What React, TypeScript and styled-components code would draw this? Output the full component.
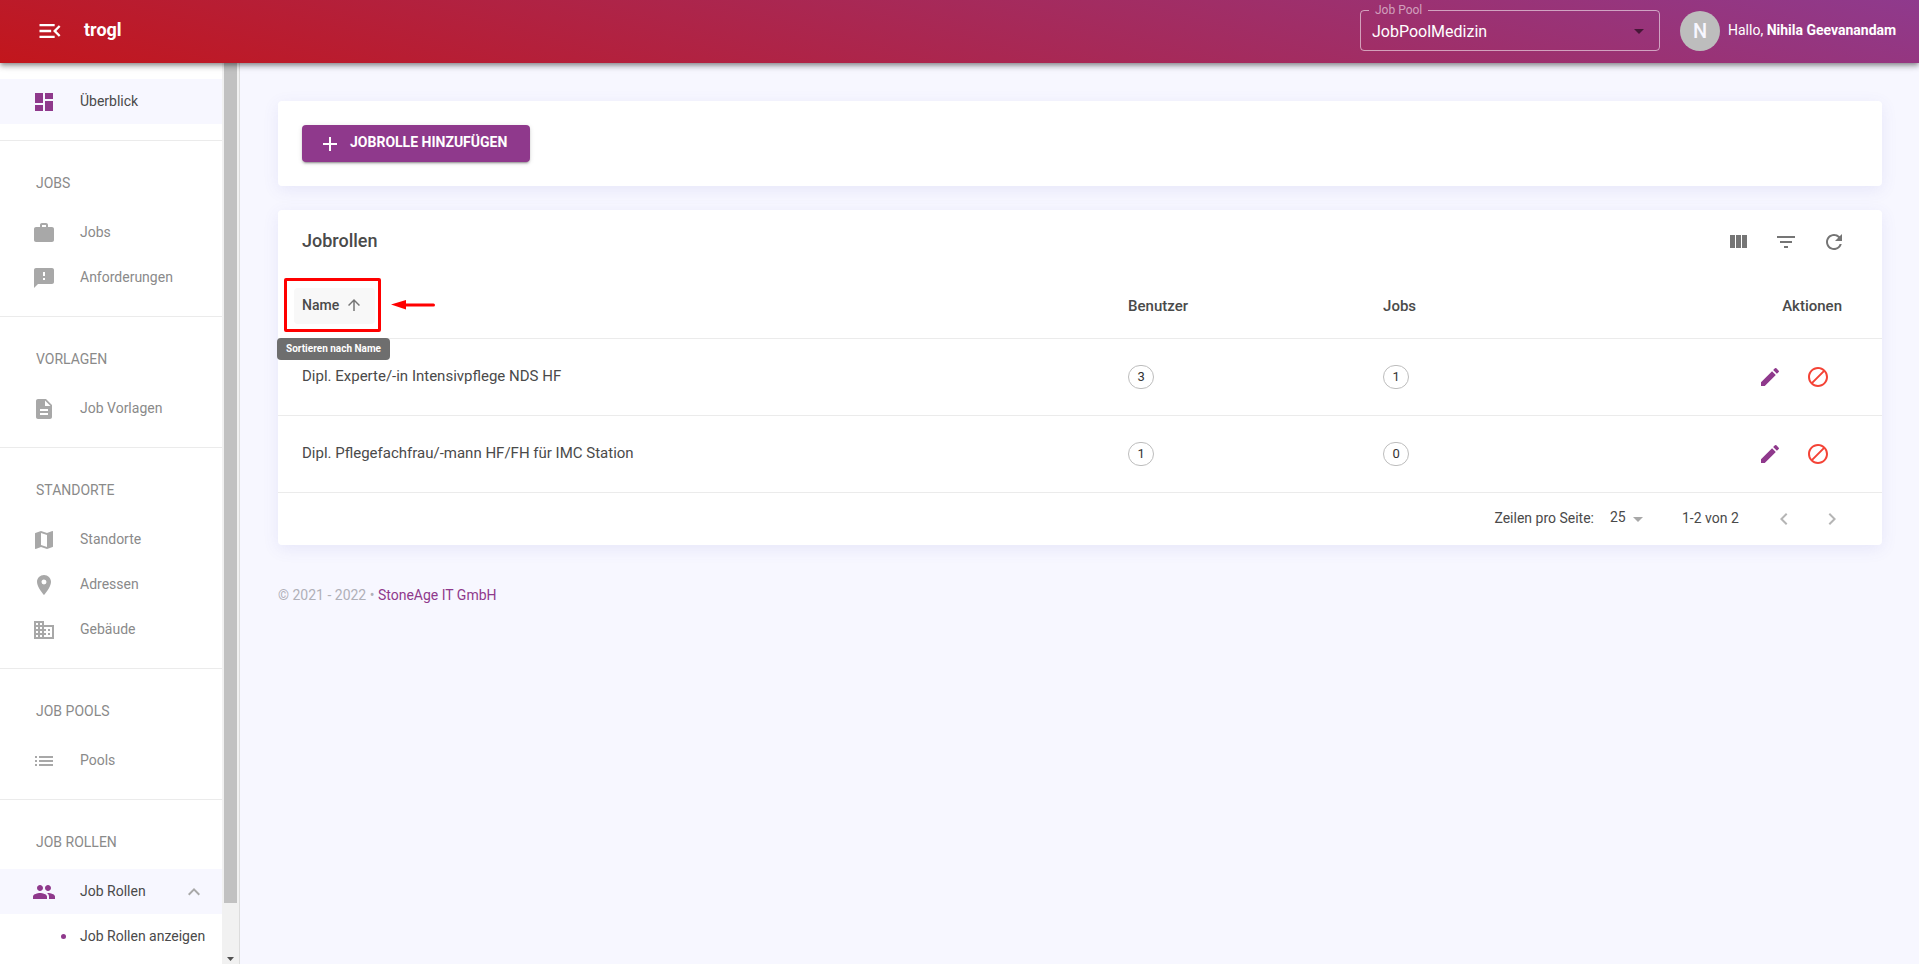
import React from "react";
import styled, { createGlobalStyle } from "styled-components";
import type { IconType } from "react-icons";
import {
  MdAdd,
  MdArrowDropDown,
  MdArrowUpward,
  MdBlock,
  MdBusiness,
  MdChevronLeft,
  MdChevronRight,
  MdDashboard,
  MdDescription,
  MdEdit,
  MdExpandLess,
  MdFeedback,
  MdFilterList,
  MdList,
  MdLocationOn,
  MdMap,
  MdMenuOpen,
  MdPeople,
  MdRefresh,
  MdWork,
} from "react-icons/md";

const purple = "#8f398c";
const pageTint = "#f7f7ff";
const textDark = "#4a4a4a";
const textMuted = "#8a8a8a";
const iconMuted = "#a8a8a8";
const line = "#ebebeb";

const GlobalStyle = createGlobalStyle`
  *, *::before, *::after { box-sizing: border-box; }
  body {
    margin: 0;
    background: ${pageTint};
    color: ${textDark};
    font-family: Roboto, "Liberation Sans", sans-serif;
    font-size: 14px;
    line-height: 20px;
  }
  button, select { font: inherit; color: inherit; }
  ul { list-style: none; margin: 0; padding: 0; }
`;

const Shell = styled.div`
  display: flex;
  flex-direction: column;
  height: 100vh;
  overflow: hidden;
`;

/* ---------- top bar ---------- */

const TopBar = styled.header`
  position: relative;
  z-index: 2;
  flex: none;
  display: flex;
  align-items: center;
  height: 63px;
  padding: 0 19px 2px 36px;
  color: #fff;
  background: linear-gradient(15deg, #c2161c 0%, #8f3a8d 100%);
  box-shadow: 0 2px 4px -1px rgba(0, 0, 0, 0.3), 0 4px 5px rgba(0, 0, 0, 0.18),
    0 1px 10px rgba(0, 0, 0, 0.12);
`;

const MenuToggle = styled.button`
  display: flex;
  padding: 0;
  border: 0;
  background: none;
  cursor: pointer;
`;

const Brand = styled.a`
  margin: 0 auto 0 20px;
  padding-bottom: 2px;
  color: #fff;
  font-size: 18px;
  font-weight: 700;
  text-decoration: none;
`;

const PoolField = styled.fieldset`
  position: relative;
  width: 300px;
  height: 46px;
  margin: 0 20px 6px 0;
  padding: 0;
  border: 1px solid rgba(255, 255, 255, 0.55);
  border-radius: 4px;
`;

const PoolLegend = styled.legend`
  height: 11px;
  margin-left: 8px;
  padding: 0 6px;
  color: rgba(255, 255, 255, 0.55);
  font-size: 12px;
  line-height: 11px;
`;

const PoolSelect = styled.select`
  display: block;
  width: 100%;
  height: 32px;
  padding: 0 32px 0 11px;
  border: 0;
  outline: 0;
  appearance: none;
  background: none;
  color: #fff;
  font-size: 16px;

  option { color: ${textDark}; }
`;

const PoolCaret = styled(MdArrowDropDown)`
  position: absolute;
  right: 8px;
  bottom: 7px;
  pointer-events: none;
  color: rgba(0, 0, 0, 0.54);
`;

const Avatar = styled.span`
  display: grid;
  place-items: center;
  width: 40px;
  height: 40px;
  border-radius: 50%;
  background: #bdbdbd;
  color: ${pageTint};
  font-size: 20px;
  font-weight: 500;
`;

const Greeting = styled.span`
  min-width: 172px;
  margin-left: 8px;
  padding-bottom: 2px;
  b { font-weight: 700; }
`;

/* ---------- sidebar ---------- */

const Body = styled.div`
  flex: 1;
  display: flex;
  min-height: 0;
`;

const Sidebar = styled.aside`
  flex: none;
  display: flex;
  width: 240px;
  background: #fff;
  border-right: 1px solid #dcdcdc;
`;

const SideNav = styled.nav`
  flex: 1;
  min-width: 0;
  overflow: hidden;
`;

const Section = styled.section`
  padding-bottom: 16px;
  & + & { border-top: 1px solid ${line}; }
  &:first-child { padding-top: 16px; }
`;

const SectionTitle = styled.h2`
  margin: 0;
  padding: 32px 36px 17px;
  color: ${textMuted};
  font-size: 14px;
  font-weight: 400;
  line-height: 20px;
  text-transform: uppercase;
`;

const NavLink = styled.a<{ $active?: boolean; $sub?: boolean }>`
  display: flex;
  align-items: center;
  gap: 24px;
  height: 45px;
  padding: 0 16px 0 32px;
  color: ${(p) => (p.$active || p.$sub ? textDark : textMuted)};
  background: ${(p) => (p.$active ? pageTint : "transparent")};
  text-decoration: none;
  white-space: nowrap;

  svg { flex: none; color: ${(p) => (p.$active ? purple : iconMuted)}; }
`;

const NavLabel = styled.span`
  flex: 1;
  padding-bottom: 2px;
`;

const Expander = styled(MdExpandLess)`
  && { color: ${iconMuted}; }
`;

const Bullet = styled.span`
  width: 5px;
  height: 5px;
  margin: 0 -10px 0 29px;
  border-radius: 50%;
  background: ${purple};
`;

const ScrollTrack = styled.div`
  display: flex;
  flex-direction: column;
  align-items: center;
  width: 17px;
  background: #f1f1f1;
`;

const ScrollThumb = styled.div`
  flex: 1;
  width: 13px;
  background: #c1c1c1;
`;

const ScrollEnd = styled.div`
  display: flex;
  align-items: flex-end;
  height: 61px;
  padding-bottom: 3px;
`;

/* ---------- content ---------- */

const Main = styled.main`
  flex: 1;
  min-width: 0;
  overflow: hidden;
  padding: 38px 37px 38px 38px;
`;

const Card = styled.section`
  margin-bottom: 24px;
  background: #fff;
  border-radius: 4px;
  box-shadow: 0 4px 16px rgba(90, 90, 200, 0.1);
`;

const ActionCard = styled(Card)`
  padding: 24px;
`;

const AddButton = styled.button`
  display: flex;
  align-items: center;
  gap: 8px;
  min-width: 228px;
  height: 37px;
  padding: 0 16px;
  border: 0;
  border-radius: 4px;
  background: ${purple};
  color: #fff;
  font-size: 14px;
  font-weight: 700;
  text-transform: uppercase;
  box-shadow: 0 3px 1px -2px rgba(0, 0, 0, 0.2), 0 2px 2px rgba(0, 0, 0, 0.14),
    0 1px 5px rgba(0, 0, 0, 0.12);
  cursor: pointer;

  span { padding-bottom: 3px; }
`;

const CardHead = styled.div`
  display: flex;
  align-items: center;
  height: 64px;
  padding: 0 24px;
`;

const CardTitle = styled.h1`
  margin: 0 auto 0 0;
  padding-bottom: 2px;
  font-size: 18px;
  font-weight: 500;
  line-height: 24px;
`;

const IconButton = styled.button<{ $color?: string }>`
  display: grid;
  place-items: center;
  width: 48px;
  height: 48px;
  padding: 0;
  border: 0;
  border-radius: 50%;
  background: none;
  color: ${(p) => p.$color ?? "#757575"};
  cursor: pointer;

  &:disabled { cursor: default; }
`;

const Table = styled.table`
  width: 100%;
  table-layout: fixed;
  border-collapse: separate;
  border-spacing: 0;
  text-align: left;
`;

const HeadCell = styled.th<{ $width?: string; $end?: boolean }>`
  width: ${(p) => p.$width ?? "auto"};
  height: 65px;
  padding: ${(p) => (p.$end ? "0 40px 0 0" : "0 24px")};
  border-bottom: 1px solid ${line};
  font-size: 15px;
  font-weight: 500;
  text-align: ${(p) => (p.$end ? "right" : "left")};
`;

const Cell = styled.td`
  height: 77px;
  padding: 0 24px;
  border-bottom: 1px solid ${line};
  font-size: 15px;
`;

const RoleName = styled.span`
  display: block;
  padding-bottom: 2px;
`;

const RowActions = styled.div`
  display: flex;
  justify-content: flex-end;
  margin-right: 16px;
`;

const Chip = styled.span`
  display: inline-grid;
  place-items: center;
  min-width: 26px;
  height: 24px;
  padding: 0 8px;
  border: 1px solid #bdbdbd;
  border-radius: 12px;
  color: #333;
  font-size: 13px;
  line-height: 22px;
  vertical-align: middle;
`;

const SortAnchor = styled.div`
  position: relative;
  width: max-content;
  margin-left: -8px;
`;

const SortButton = styled.button`
  display: flex;
  align-items: center;
  min-width: 81px;
  height: 36px;
  padding: 0 12px 2px 8px;
  border: 0;
  border-radius: 4px;
  background: #f8f8f8;
  font-size: 14px;
  font-weight: 500;
  cursor: pointer;

  svg { margin-left: 6px; color: #757575; }
`;

const Tooltip = styled.span`
  position: absolute;
  top: 50px;
  left: -17px;
  z-index: 1;
  min-width: 113px;
  padding: 4px 8px;
  border-radius: 4px;
  background: #6e6e6e;
  color: #fff;
  font-size: 10px;
  font-weight: 700;
  line-height: 14px;
  text-align: center;
  white-space: nowrap;
`;

const Highlight = styled.span`
  position: absolute;
  inset: -10px -6px -8px -10px;
  border: 3px solid #f00;
  border-radius: 2px;
  pointer-events: none;
`;

const Pointer = styled.svg`
  position: absolute;
  top: 11px;
  left: calc(100% + 16px);
`;

const Pagination = styled.div`
  display: flex;
  align-items: center;
  justify-content: flex-end;
  height: 52px;
  padding-right: 26px;
`;

const RowsLabel = styled.label`
  display: flex;
  align-items: center;
  gap: 16px;
  padding-bottom: 2px;
`;

const RowsSelectBox = styled.span`
  position: relative;
  display: flex;
  color: ${iconMuted};

  svg { position: absolute; right: 0; top: 0; pointer-events: none; }
`;

const RowsSelect = styled.select`
  width: 40px;
  height: 22px;
  padding: 0 0 2px;
  border: 0;
  outline: 0;
  appearance: none;
  background: none;
  color: ${textDark};
`;

const Range = styled.span`
  min-width: 58px;
  margin: 0 20px 0 32px;
  padding-bottom: 2px;
`;

const Footer = styled.footer`
  padding-top: 16px;
  color: #b0b0b8;
  font-size: 14px;

  a { color: ${purple}; text-decoration: none; }
`;

/* ---------- data ---------- */

type NavEntry = { label: string; icon: IconType; active?: boolean; children?: string[] };

const sections: { title?: string; items: NavEntry[] }[] = [
  { items: [{ label: "Überblick", icon: MdDashboard, active: true }] },
  {
    title: "Jobs",
    items: [
      { label: "Jobs", icon: MdWork },
      { label: "Anforderungen", icon: MdFeedback },
    ],
  },
  { title: "Vorlagen", items: [{ label: "Job Vorlagen", icon: MdDescription }] },
  {
    title: "Standorte",
    items: [
      { label: "Standorte", icon: MdMap },
      { label: "Adressen", icon: MdLocationOn },
      { label: "Gebäude", icon: MdBusiness },
    ],
  },
  { title: "Job Pools", items: [{ label: "Pools", icon: MdList }] },
  {
    title: "Job Rollen",
    items: [
      { label: "Job Rollen", icon: MdPeople, active: true, children: ["Job Rollen anzeigen"] },
    ],
  },
];

const roles = [
  { name: "Dipl. Experte/-in Intensivpflege NDS HF", users: 3, jobs: 1 },
  { name: "Dipl. Pflegefachfrau/-mann HF/FH für IMC Station", users: 1, jobs: 0 },
];

const ColumnsIcon = () => (
  <svg width="24" height="24" viewBox="0 0 24 24" fill="currentColor" aria-hidden="true">
    <path d="M10 18h5V5h-5v13zm-6 0h5V5H4v13zM16 5v13h5V5h-5z" />
  </svg>
);

function NavItem({ entry }: { entry: NavEntry }) {
  const Icon = entry.icon;
  return (
    <li>
      <NavLink href="#" $active={entry.active}>
        <Icon size={24} />
        <NavLabel>{entry.label}</NavLabel>
        {entry.children && <Expander size={24} />}
      </NavLink>
      {entry.children && (
        <ul>
          {entry.children.map((child) => (
            <li key={child}>
              <NavLink href="#" $sub>
                <Bullet />
                <NavLabel>{child}</NavLabel>
              </NavLink>
            </li>
          ))}
        </ul>
      )}
    </li>
  );
}

export default function App() {
  return (
    <>
      <GlobalStyle />
      <Shell>
        <TopBar>
          <MenuToggle aria-label="Menü">
            <MdMenuOpen size={28} />
          </MenuToggle>
          <Brand href="#">trogl</Brand>
          <PoolField>
            <PoolLegend>
              <label htmlFor="pool">Job Pool</label>
            </PoolLegend>
            <PoolSelect id="pool" defaultValue="JobPoolMedizin">
              <option>JobPoolMedizin</option>
            </PoolSelect>
            <PoolCaret size={24} />
          </PoolField>
          <Avatar>N</Avatar>
          <Greeting>
            Hallo, <b>Nihila Geevanandam</b>
          </Greeting>
        </TopBar>

        <Body>
          <Sidebar>
            <SideNav>
              {sections.map((section, i) => (
                <Section key={i}>
                  {section.title && <SectionTitle>{section.title}</SectionTitle>}
                  <ul>
                    {section.items.map((entry) => (
                      <NavItem key={entry.label} entry={entry} />
                    ))}
                  </ul>
                </Section>
              ))}
            </SideNav>
            <ScrollTrack aria-hidden="true">
              <ScrollThumb />
              <ScrollEnd>
                <svg width="7" height="4" viewBox="0 0 7 4">
                  <path d="M0 0h7L3.500 4z" fill="#505050" />
                </svg>
              </ScrollEnd>
            </ScrollTrack>
          </Sidebar>

          <Main>
            <ActionCard>
              <AddButton>
                <MdAdd size={24} />
                <span>Jobrolle hinzufügen</span>
              </AddButton>
            </ActionCard>

            <Card>
              <CardHead>
                <CardTitle>Jobrollen</CardTitle>
                <IconButton aria-label="Spalten">
                  <ColumnsIcon />
                </IconButton>
                <IconButton aria-label="Filter">
                  <MdFilterList size={24} />
                </IconButton>
                <IconButton aria-label="Aktualisieren">
                  <MdRefresh size={24} />
                </IconButton>
              </CardHead>

              <Table>
                <thead>
                  <tr>
                    <HeadCell $width="51.5%">
                      <SortAnchor>
                        <SortButton>
                          Name
                          <MdArrowUpward size={18} />
                        </SortButton>
                        <Highlight />
                        <Pointer width="44" height="12" viewBox="0 0 44 12" aria-hidden="true">
                          <path d="M12 6h30.500" stroke="#f00" strokeWidth="3" strokeLinecap="round" />
                          <path d="M0 5.500L15 1v9.500z" fill="#f00" />
                        </Pointer>
                        <Tooltip role="tooltip">Sortieren nach Name</Tooltip>
                      </SortAnchor>
                    </HeadCell>
                    <HeadCell $width="15.9%">Benutzer</HeadCell>
                    <HeadCell $width="15.9%">Jobs</HeadCell>
                    <HeadCell $end>Aktionen</HeadCell>
                  </tr>
                </thead>
                <tbody>
                  {roles.map((role) => (
                    <tr key={role.name}>
                      <Cell>
                        <RoleName>{role.name}</RoleName>
                      </Cell>
                      <Cell>
                        <Chip>{role.users}</Chip>
                      </Cell>
                      <Cell>
                        <Chip>{role.jobs}</Chip>
                      </Cell>
                      <Cell>
                        <RowActions>
                          <IconButton $color={purple} aria-label="Bearbeiten">
                            <MdEdit size={24} />
                          </IconButton>
                          <IconButton $color="#f44336" aria-label="Sperren">
                            <MdBlock size={24} />
                          </IconButton>
                        </RowActions>
                      </Cell>
                    </tr>
                  ))}
                </tbody>
              </Table>

              <Pagination>
                <RowsLabel>
                  Zeilen pro Seite:
                  <RowsSelectBox>
                    <RowsSelect defaultValue="25">
                      <option>25</option>
                    </RowsSelect>
                    <MdArrowDropDown size={24} />
                  </RowsSelectBox>
                </RowsLabel>
                <Range>1-2 von 2</Range>
                <IconButton $color="#b5b5b5" disabled aria-label="Vorherige Seite">
                  <MdChevronLeft size={24} />
                </IconButton>
                <IconButton $color="#b5b5b5" disabled aria-label="Nächste Seite">
                  <MdChevronRight size={24} />
                </IconButton>
              </Pagination>
            </Card>

            <Footer>
              © 2021 - 2022 • <a href="#">StoneAge IT GmbH</a>
            </Footer>
          </Main>
        </Body>
      </Shell>
    </>
  );
}
